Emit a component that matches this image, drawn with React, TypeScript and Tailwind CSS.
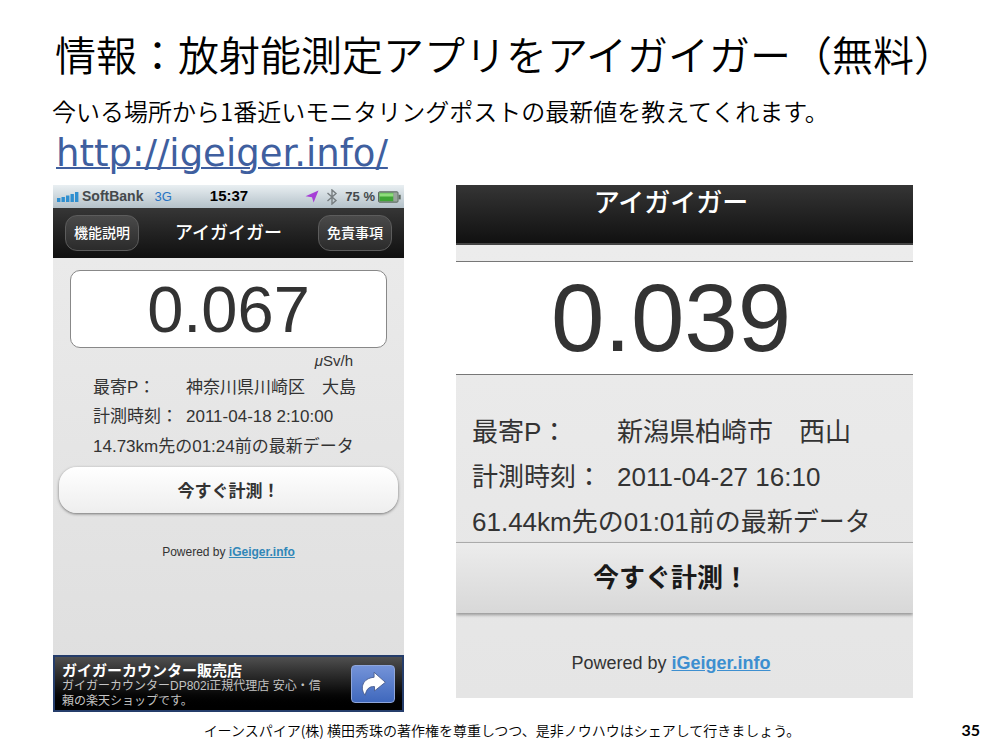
import type { ReactNode } from "react";

const UI_FONT = "font-['Liberation_Sans','Noto_Sans_CJK_JP',sans-serif]";

function SignalIcon() {
  return (
    <svg viewBox="0 0 22 12" className="h-3 w-[22px]" fill="#2f8fd0" aria-hidden="true">
      <rect x="0" y="7" width="3.4" height="4" />
      <rect x="4.5" y="6" width="3.4" height="5" />
      <rect x="9" y="4.5" width="3.4" height="6.5" />
      <rect x="13.5" y="3" width="3.4" height="8" />
      <rect x="18" y="1" width="3.4" height="10" />
    </svg>
  );
}

function LocationIcon() {
  return (
    <svg viewBox="0 0 14 13" className="h-[13px] w-[14px]" aria-hidden="true">
      <path d="M13.5 0.5 L8.6 12.5 L7 7.2 L0.5 6.2 Z" fill="#a63fd6" />
    </svg>
  );
}

function BluetoothIcon() {
  return (
    <svg viewBox="0 0 12 16" className="h-4 w-3" fill="none" stroke="#777d80" strokeWidth="1.4" aria-hidden="true">
      <path d="M1.5 4 L10 11.5 L6 15 V1 L10 4.5 L1.5 12" />
    </svg>
  );
}

function BatteryIcon() {
  return (
    <svg viewBox="0 0 23 12" className="h-3 w-[23px]" aria-hidden="true">
      <rect x="0.5" y="0.8" width="19.5" height="10.4" rx="1" fill="#8c9a90" stroke="#5e6a62" />
      <rect x="1.5" y="1.8" width="14" height="8.4" fill="#3fa535" />
      <rect x="1.5" y="2.3" width="14" height="3.2" fill="#8fdc7c" />
      <rect x="15.5" y="1.8" width="3.8" height="8.4" fill="#9aa59d" />
      <rect x="20.5" y="3.8" width="2.2" height="4.6" fill="#5e6a62" />
    </svg>
  );
}

function ShareArrow() {
  return (
    <svg viewBox="0 0 24 24" className="h-[26px] w-[26px]" aria-hidden="true">
      <path
        d="M13 1.2 L23.4 10.4 L13.4 18.4 V14.4 C8.6 14 6 16.4 4.8 22.4 C-0.6 16 2.4 6.6 13 5.8 Z"
        fill="#fff"
        stroke="#44588a"
        strokeWidth="0.8"
      />
    </svg>
  );
}

function NavButton({ children }: { children: ReactNode }) {
  return (
    <button
      type="button"
      className="h-9 rounded-xl border border-[#5c5c5c] bg-linear-to-b from-[#4a4a4a] to-[#2b2b2b] px-2 pt-[2px] text-[14px] font-medium text-white"
    >
      {children}
    </button>
  );
}

function PhoneScreen() {
  return (
    <section className={`flex flex-col bg-linear-to-b from-[#ececec] to-[#dedede] text-[#333] ${UI_FONT}`}>
      <div className="grid h-[23px] grid-cols-[1fr_auto_1fr] items-center bg-linear-to-b from-[#e9eff2] to-[#b4c1c9] pr-[3px] pl-1 text-[13px] font-bold text-[#45494c]">
        <div className="flex items-center gap-[3px]">
          <SignalIcon />
          <span className="text-[14px]">SoftBank</span>
          <span className="ml-2 text-[13px] font-normal text-[#2673c4]">3G</span>
        </div>
        <span className="text-[15px] text-black">15:37</span>
        <div className="flex items-center justify-end gap-[3px]">
          <LocationIcon />
          <span className="mx-1 flex">
            <BluetoothIcon />
          </span>
          <span>75 %</span>
          <BatteryIcon />
        </div>
      </div>
      <div className="flex h-[50px] items-center justify-between border-b border-[#111] bg-linear-to-b from-[#363636] to-[#111] px-3">
        <NavButton>機能説明</NavButton>
        <h2 className="pt-[2px] text-[18px] font-medium text-white">アイガイガー</h2>
        <NavButton>免責事項</NavButton>
      </div>

      <div className="mx-[17px] mt-3 flex h-[78px] items-center justify-center rounded-[10px] border border-[#888] bg-white text-[65px] leading-none">
        0.067
      </div>
      <div className="pr-[51px] text-right text-[15px] leading-[25px]">
        <i>μ</i>Sv/h
      </div>
      <dl className="grid grid-cols-[93px_1fr] pl-10 text-[17px] leading-[29px] whitespace-nowrap">
        <dt>最寄P：</dt>
        <dd>神奈川県川崎区　大島</dd>
        <dt>計測時刻：</dt>
        <dd>2011-04-18 2:10:00</dd>
      </dl>
      <p className="pl-10 text-[17px] leading-[31px] whitespace-nowrap">14.73km先の01:24前の最新データ</p>
      <button
        type="button"
        className="mx-1.5 mt-[5px] h-[46px] rounded-[18px] bg-linear-to-b from-white to-[#eee] pt-1 text-[17px] font-bold shadow-[0_1px_3px_rgba(0,0,0,0.5)]"
      >
        今すぐ計測！
      </button>
      <p className="mt-[29px] mb-[93px] text-center text-[12px] leading-5">
        Powered by{" "}
        <a href="http://igeiger.info/" className="font-bold text-[#3187b8] underline">
          iGeiger.info
        </a>
      </p>

      <div className="mt-auto flex h-[57px] items-center justify-between border-2 border-[#253d6b] bg-linear-to-b from-[#505050] via-[#1c1c1c] to-black pr-[7px] pl-[7px]">
        <div className="pt-1">
          <h3 className="text-[15px] leading-4 font-bold whitespace-nowrap text-white">ガイガーカウンター販売店</h3>
          <p className="text-[12px] leading-[15px] whitespace-nowrap text-[#c4c4c4]">
            ガイガーカウンターDP802i正規代理店 安心・信
            <br />
            頼の楽天ショップです。
          </p>
        </div>
        <button
          type="button"
          aria-label="開く"
          className="flex h-[38px] w-11 items-center justify-center rounded-[4px] border border-[#8fa6da] bg-linear-to-b from-[#7493d8] to-[#3f68bd]"
        >
          <ShareArrow />
        </button>
      </div>
    </section>
  );
}

function DetailScreen() {
  return (
    <section
      className={`flex flex-col self-start overflow-hidden bg-linear-to-b from-[#ededed] to-[#e5e5e5] text-[#333] ${UI_FONT}`}
    >
      <div className="h-[60px] border-b-2 border-[#444] bg-linear-to-b from-[#353535] to-[#111] pr-[27px] text-center">
        <h2 className="text-[26px] leading-9 font-medium text-white">アイガイガー</h2>
      </div>
      <div className="mt-4 flex h-[114px] items-center justify-center border-y border-[#777] bg-white pr-[27px] text-[96px] leading-none">
        0.039
      </div>
      <div className="flex flex-col gap-[5px] pt-[37px] pl-4 text-[26px] leading-10 whitespace-nowrap">
        <dl className="grid grid-cols-[145px_1fr] gap-y-[5px]">
          <dt>最寄P：</dt>
          <dd>新潟県柏崎市　西山</dd>
          <dt>計測時刻：</dt>
          <dd>2011-04-27 16:10</dd>
        </dl>
        <p>61.44km先の01:01前の最新データ</p>
      </div>
      <button
        type="button"
        className="h-[71px] border-t border-[#aaa] bg-linear-to-b from-[#ececec] to-[#d8d8d8] pr-[27px] text-[26px] font-bold text-[#1a1a1a] shadow-[0_2px_3px_rgba(0,0,0,0.35)]"
      >
        今すぐ計測！
      </button>
      <p className="pt-[38px] pr-[27px] pb-[23px] text-center text-[18px] leading-6">
        Powered by{" "}
        <a href="http://igeiger.info/" className="font-bold text-[#3d8fd0] underline">
          iGeiger.info
        </a>
      </p>
    </section>
  );
}

export default function App() {
  return (
    <main className="min-h-screen bg-white font-['Noto_Sans_CJK_JP',sans-serif] text-black">
      <header className="pt-6 pl-[52px] whitespace-nowrap">
        <h1 className="pl-[3px] text-[41px] leading-[58px] font-[350]">情報：放射能測定アプリをアイガイガー（無料）</h1>
        <p className="mt-[14px] text-[24px] leading-[30px] font-[350]">
          今いる場所から1番近いモニタリングポストの最新値を教えてくれます。
        </p>
        <a
          href="http://igeiger.info/"
          className="mt-2 ml-1 block w-fit font-['DejaVu_Sans',sans-serif] text-[37px] leading-10 text-[#3f5f9f] underline decoration-2"
        >
          http://igeiger.info/
        </a>
      </header>

      <div className="mt-[11px] grid grid-cols-[351fr_457fr] gap-[52px] pr-[91px] pl-[53px]">
        <PhoneScreen />
        <DetailScreen />
      </div>

      <footer className="mt-2 grid grid-cols-[1fr_auto_1fr] items-center text-[14px] leading-5 font-[350]">
        <span />
        <p>イーンスパイア(株) 横田秀珠の著作権を尊重しつつ、是非ノウハウはシェアして行きましょう。</p>
        <span className="pr-6 text-right font-['Lato',sans-serif] text-[16px] font-bold">35</span>
      </footer>
    </main>
  );
}
